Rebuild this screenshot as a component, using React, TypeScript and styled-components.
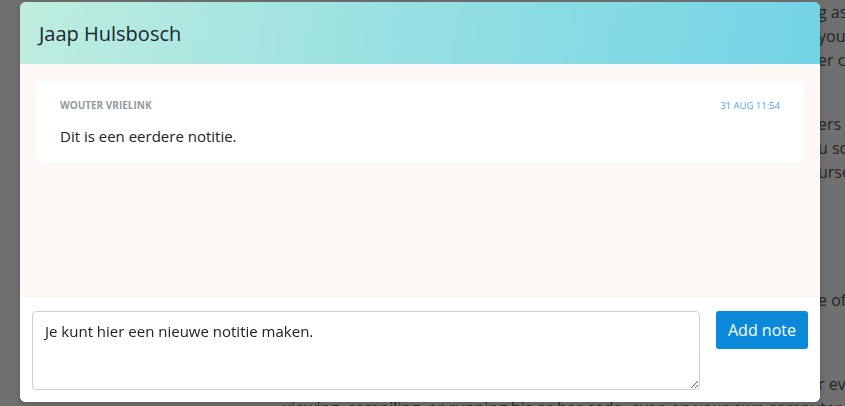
import React from "react";
import styled, { createGlobalStyle } from "styled-components";

const Global = createGlobalStyle`
  html, body { margin: 0; padding: 0; }
  body {
    width: 845px;
    height: 406px;
    overflow: hidden;
    background: #ffffff;
    font-family: "Open Sans", "Noto Sans", sans-serif;
  }
`;

const Page = styled.div`
  width: 845px;
  height: 406px;
  overflow: hidden;
  padding-left: 283px;
  box-sizing: border-box;
`;

const Para = styled.div<{ $gap: number }>`
  margin-top: ${(p) => p.$gap}px;
`;

const Line = styled.div<{ $indent?: number }>`
  font-size: 16px;
  line-height: 24px;
  color: #555555;
  white-space: nowrap;
  padding-left: ${(p) => p.$indent ?? 0}px;
`;

const Overlay = styled.div`
  position: fixed;
  inset: 0;
  background: rgba(0, 0, 0, 0.56);
`;

const Modal = styled.div`
  position: fixed;
  left: 20px;
  top: 2px;
  width: 800px;
  height: 400px;
  border-radius: 6px;
  overflow: hidden;
  background: #ffffff;
  display: flex;
  flex-direction: column;
  box-shadow: 0 2px 10px rgba(0, 0, 0, 0.2);
`;

const Header = styled.div`
  height: 62px;
  flex: none;
  display: flex;
  align-items: center;
  padding-left: 19px;
  background: linear-gradient(100deg, #bfeddf 0%, #99e1e2 45%, #72d3e6 100%);
`;

const Title = styled.h1`
  margin: 0;
  font-size: 20px;
  font-weight: 400;
  color: #1b2530;
`;

const Body = styled.div`
  flex: 1;
  background: #fdf8f5;
  padding: 17px 16px;
`;

const Card = styled.div`
  background: #ffffff;
  border-radius: 6px;
  padding: 17px 24px 14px 24px;
  height: 82px;
  box-sizing: border-box;
`;

const CardTop = styled.div`
  display: flex;
  justify-content: space-between;
  align-items: center;
`;

const Author = styled.span`
  font-size: 10px;
  font-weight: 700;
  color: #8e9ba2;
  text-transform: uppercase;
`;

const Stamp = styled.span`
  font-size: 9.5px;
  color: #4f9ff0;
  text-transform: uppercase;
`;

const NoteText = styled.p`
  margin: 14px 0 0 0;
  font-size: 15px;
  color: #222222;
`;

const Footer = styled.div`
  height: 104px;
  flex: none;
  box-sizing: border-box;
  padding: 13px 12px 12px 12px;
  display: flex;
  gap: 16px;
  align-items: flex-start;
  background: #ffffff;
`;

const Area = styled.textarea`
  flex: 1;
  height: 79px;
  box-sizing: border-box;
  border: 1px solid #cdd0d6;
  border-radius: 4px;
  padding: 9px 12px;
  font-family: "Open Sans", "Noto Sans", sans-serif;
  font-size: 15px;
  color: #222222;
  outline: none;
`;

const Button = styled.button`
  width: 92px;
  height: 38px;
  border: none;
  border-radius: 3px;
  background: #0a88d9;
  color: #ffffff;
  font-family: "Open Sans", "Noto Sans", sans-serif;
  font-size: 16px;
  cursor: pointer;
`;

export default function App() {
  return (
    <>
      <Global />
      <Page>
        <Line $indent={535}>g asking</Line>
        <Line $indent={535}>you</Line>
        <Line $indent={535}>er can</Line>
        <Para $gap={40}>
          <Line $indent={535}>ers may</Line>
          <Line $indent={535}>u scan</Line>
          <Line $indent={535}>urse</Line>
        </Para>
        <Para $gap={104}>
          <Line $indent={535}>e of</Line>
        </Para>
        <Para $gap={60}>
          <Line $indent={535}>r even</Line>
          <Line>viewing, compiling, or running his or her code, even on your own computer.</Line>
        </Para>
      </Page>
      <Overlay />
      <Modal>
        <Header>
          <Title>Jaap Hulsbosch</Title>
        </Header>
        <Body>
          <Card>
            <CardTop>
              <Author>Wouter Vrielink</Author>
              <Stamp>31 Aug 11:54</Stamp>
            </CardTop>
            <NoteText>Dit is een eerdere notitie.</NoteText>
          </Card>
        </Body>
        <Footer>
          <Area defaultValue="Je kunt hier een nieuwe notitie maken." />
          <Button>Add note</Button>
        </Footer>
      </Modal>
    </>
  );
}
